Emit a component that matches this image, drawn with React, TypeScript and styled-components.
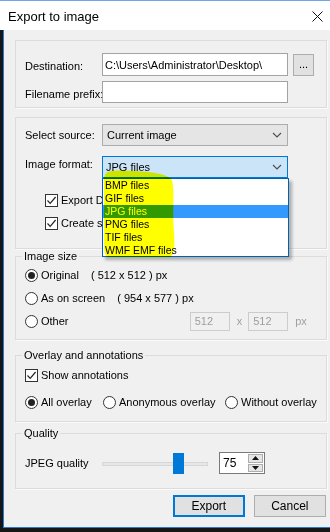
import React from "react";
import styled, { createGlobalStyle } from "styled-components";

const Global = createGlobalStyle`
  html, body { margin: 0; padding: 0; background: #161616; }
  body {
    width: 330px; height: 532px; overflow: hidden;
    font-family: "Liberation Sans", Arial, sans-serif;
    font-size: 11px; color: #000;
  }
  * { box-sizing: border-box; }
`;

const Screen = styled.div`
  width: 330px;
  height: 532px;
  display: flex;
  flex-direction: column;
  background: #161616;
`;

const TitleBar = styled.div`
  height: 30px;
  flex: none;
  background: #fff;
  border-top: 1px solid #6fa8e6;
  display: flex;
  align-items: center;
  justify-content: space-between;
  padding: 1px 7px 0 8px;
  font-size: 13px;
  color: #000;
`;

const BodyRow = styled.div`
  display: flex;
  flex: none;
  height: 498px;
`;

const Strip = styled.div`
  width: 3px;
  flex: none;
  background: #161616;
`;

const Client = styled.div`
  flex: 1;
  background: #f0f0f0;
  border-left: 1px solid #2b79d0;
  border-bottom: 1px solid #2b79d0;
  padding: 10px 7px 0 11px;
  display: flex;
  flex-direction: column;
`;

const Group = styled.fieldset<{ $mt?: number }>`
  margin: ${(p) => p.$mt ?? 0}px 0 0 0;
  padding: 0;
  min-width: 0;
  border: 1px solid #dcdcdc;
  box-shadow: 1px 1px 0 #fbfbfb;
`;

const Legend = styled.legend`
  margin-left: 6px;
  padding: 0 2px;
  line-height: 14px;
  font-size: 11px;
`;

const Content = styled.div<{ $pt: number; $pb: number }>`
  padding: ${(p) => p.$pt}px 9px ${(p) => p.$pb}px 9px;
  display: flex;
  flex-direction: column;
`;

const FormGrid = styled.div<{ $gap: number }>`
  display: grid;
  grid-template-columns: 77px 186px auto;
  row-gap: ${(p) => p.$gap}px;
  align-items: start;
`;

const FieldLabel = styled.div<{ $pt?: number }>`
  padding-top: ${(p) => p.$pt ?? 0}px;
  line-height: 16px;
  white-space: nowrap;
`;

const TextBox = styled.div<{ $h: number }>`
  height: ${(p) => p.$h}px;
  background: #fff;
  border: 1px solid #a3a3a3;
  padding: 0 2px;
  display: flex;
  align-items: center;
  white-space: nowrap;
  overflow: hidden;
`;

const SmallButton = styled.div`
  margin: 1px 0 0 5px;
  width: 21px;
  height: 22px;
  background: #e1e1e1;
  border: 1px solid #adadad;
  display: flex;
  align-items: center;
  justify-content: center;
  padding-bottom: 2px;
`;

const SelectWrap = styled.div`
  position: relative;
`;

const Select = styled.div<{ $focus?: boolean }>`
  height: 22px;
  background: ${(p) => (p.$focus ? "#cce4f7" : "#e5e5e5")};
  border: 1px solid ${(p) => (p.$focus ? "#0078d7" : "#acacac")};
  display: flex;
  align-items: center;
  justify-content: space-between;
  padding: 0 5px 0 ${(p) => (p.$focus ? 3 : 4)}px;
  white-space: nowrap;
`;

const DropList = styled.div`
  position: absolute;
  left: 0;
  top: 100%;
  width: 187px;
  height: 79px;
  background: #fff;
  border: 1px solid #0063b1;
  box-shadow: 3px 3px 3px rgba(0, 0, 0, 0.28);
  z-index: 10;
  display: flex;
  flex-direction: column;
  font-size: 10.5px;
`;

const DropItem = styled.div<{ $sel?: boolean }>`
  height: 13px;
  line-height: 13px;
  padding-left: 2px;
  background: ${(p) => (p.$sel ? "#3399ff" : "transparent")};
  color: ${(p) => (p.$sel ? "#fff" : "#000")};
  white-space: nowrap;
`;

const Marker = styled.svg`
  position: absolute;
  left: -2px;
  top: 11px;
  width: 80px;
  height: 92px;
  z-index: 11;
  mix-blend-mode: multiply;
  pointer-events: none;
`;

const CheckRow = styled.div<{ $ml?: number; $mt?: number }>`
  display: flex;
  align-items: center;
  gap: 3px;
  height: 20px;
  margin-left: ${(p) => p.$ml ?? 0}px;
  margin-top: ${(p) => p.$mt ?? 0}px;
  white-space: nowrap;
`;

const Box = styled.div`
  width: 13px;
  height: 13px;
  flex: none;
  background: #fff;
  border: 1px solid #333;
  display: flex;
  align-items: center;
  justify-content: center;
`;

const Circle = styled.div<{ $on?: boolean }>`
  width: 13px;
  height: 13px;
  flex: none;
  border-radius: 50%;
  background: #fff;
  border: 1px solid #333;
  display: flex;
  align-items: center;
  justify-content: center;
  &::after {
    content: "";
    width: 7px;
    height: 7px;
    border-radius: 50%;
    background: ${(p) => (p.$on ? "#222" : "transparent")};
  }
`;

const RadioLabel = styled.div<{ $w?: number }>`
  display: flex;
  align-items: center;
  gap: 3px;
  ${(p) => (p.$w ? `width: ${p.$w}px;` : "")}
`;

const Row = styled.div<{ $mt?: number }>`
  display: flex;
  align-items: center;
  height: 20px;
  margin-top: ${(p) => p.$mt ?? 0}px;
  white-space: nowrap;
`;

const SizeValue = styled.span`
  margin-left: 12px;
`;

const Dimensions = styled.div`
  margin-left: auto;
  margin-right: 10px;
  display: flex;
  align-items: center;
  color: #a0a0a0;
`;

const DisabledBox = styled.div`
  width: 40px;
  height: 19px;
  border: 1px solid #cccccc;
  background: #f0f0f0;
  color: #9d9d9d;
  display: flex;
  align-items: center;
  padding-left: 4px;
`;

const Times = styled.span`
  margin: 0 6px 0 7px;
`;

const Px = styled.span`
  margin-left: 7px;
`;

const QualityRow = styled.div`
  display: flex;
  align-items: center;
  height: 22px;
`;

const QualityLabel = styled.div`
  width: 77px;
  flex: none;
`;

const Track = styled.div`
  position: relative;
  width: 106px;
  height: 4px;
  background: #e7e7e7;
  border: 1px solid #d6d6d6;
  margin-top: 2px;
`;

const Thumb = styled.div`
  position: absolute;
  left: 70px;
  top: -10px;
  width: 11px;
  height: 21px;
  background: #0078d7;
`;

const Spin = styled.div`
  margin-left: 11px;
  width: 46px;
  height: 22px;
  background: #fff;
  border: 1px solid #7a7a7a;
  display: flex;
  align-items: stretch;
`;

const SpinText = styled.div`
  flex: 1;
  display: flex;
  align-items: center;
  padding-left: 3px;
  font-size: 12px;
`;

const SpinButtons = styled.div`
  width: 16px;
  display: flex;
  flex-direction: column;
  gap: 1px;
  padding: 1px 1px 1px 0;
`;

const SpinBtn = styled.div`
  flex: 1;
  background: #e5e5e5;
  border: 1px solid #adadad;
  display: flex;
  align-items: center;
  justify-content: center;
`;

const Buttons = styled.div`
  display: flex;
  justify-content: flex-end;
  gap: 9px;
  margin-top: 6px;
  padding-right: 1px;
`;

const Button = styled.div<{ $default?: boolean }>`
  width: 72px;
  height: 22px;
  background: #e1e1e1;
  border: ${(p) => (p.$default ? "2px solid #0078d7" : "1px solid #adadad")};
  display: flex;
  align-items: center;
  justify-content: center;
  font-size: 12px;
`;

const Chevron = () => (
  <svg width="10" height="6" viewBox="0 0 10 6">
    <path d="M1 1 L5 5 L9 1" fill="none" stroke="#4d4d4d" strokeWidth="1.1" />
  </svg>
);

const Check = () => (
  <svg width="11" height="11" viewBox="0 0 11 11">
    <path d="M1.5 5.5 L4.2 8.3 L9.6 2" fill="none" stroke="#222" strokeWidth="1.2" />
  </svg>
);

const Tri = ({ up }: { up?: boolean }) => (
  <svg width="7" height="4" viewBox="0 0 7 4">
    <path d={up ? "M0 4 L3.5 0 L7 4 Z" : "M0 0 L3.5 4 L7 0 Z"} fill="#111" />
  </svg>
);

export default function App() {
  const formats = ["BMP files", "GIF files", "JPG files", "PNG files", "TIF files", "WMF EMF files"];
  return (
    <>
      <Global />
      <Screen>
        <TitleBar>
          <span>Export to image</span>
          <svg width="11" height="11" viewBox="0 0 11 11">
            <path d="M0.5 0.5 L10.5 10.5 M10.5 0.5 L0.5 10.5" stroke="#111" strokeWidth="1" />
          </svg>
        </TitleBar>
        <BodyRow>
          <Strip />
          <Client>
            <Group>
              <Content $pt={12} $pb={4}>
                <FormGrid $gap={5}>
                  <FieldLabel $pt={5}>Destination:</FieldLabel>
                  <TextBox $h={23}>C:\Users\Administrator\Desktop\</TextBox>
                  <SmallButton>...</SmallButton>
                  <FieldLabel $pt={5}>Filename prefix:</FieldLabel>
                  <TextBox $h={22} />
                  <span />
                </FormGrid>
              </Content>
            </Group>

            <Group $mt={9}>
              <Content $pt={6} $pb={15}>
                <FormGrid $gap={10}>
                  <FieldLabel $pt={3}>Select source:</FieldLabel>
                  <Select>
                    <span>Current image</span>
                    <Chevron />
                  </Select>
                  <span />
                  <FieldLabel $pt={0}>Image format:</FieldLabel>
                  <SelectWrap>
                    <Select $focus>
                      <span>JPG files</span>
                      <Chevron />
                    </Select>
                    <DropList>
                      {formats.map((f) => (
                        <DropItem key={f} $sel={f === "JPG files"}>
                          {f}
                        </DropItem>
                      ))}
                    </DropList>
                    <Marker viewBox="0 0 80 92">
                      <path
                        d="M5 8 C7 3 16 3 35 4 C54 5 67 7 72 13 C75 26 72 46 74 66 C75 79 74 88 70 90 L8 90 C4 89 4 82 4 72 L4 17 C4 12 4 10 5 8 Z"
                        fill="#ffff00"
                      />
                    </Marker>
                  </SelectWrap>
                  <span />
                </FormGrid>
                <CheckRow $ml={20} $mt={12}>
                  <Box>
                    <Check />
                  </Box>
                  <span>Export D</span>
                </CheckRow>
                <CheckRow $ml={20} $mt={3}>
                  <Box>
                    <Check />
                  </Box>
                  <span>Create s</span>
                </CheckRow>
              </Content>
            </Group>

            <Group>
              <Legend>Image size</Legend>
              <Content $pt={2} $pb={8}>
                <Row>
                  <RadioLabel>
                    <Circle $on />
                    <span>Original</span>
                  </RadioLabel>
                  <SizeValue>( 512 x 512 ) px</SizeValue>
                </Row>
                <Row $mt={3}>
                  <RadioLabel>
                    <Circle />
                    <span>As on screen</span>
                  </RadioLabel>
                  <SizeValue>( 954 x 577 ) px</SizeValue>
                </Row>
                <Row $mt={3}>
                  <RadioLabel>
                    <Circle />
                    <span>Other</span>
                  </RadioLabel>
                  <Dimensions>
                    <DisabledBox>512</DisabledBox>
                    <Times>x</Times>
                    <DisabledBox>512</DisabledBox>
                    <Px>px</Px>
                  </Dimensions>
                </Row>
              </Content>
            </Group>

            <Group $mt={8}>
              <Legend>Overlay and annotations</Legend>
              <Content $pt={3} $pb={9}>
                <CheckRow>
                  <Box>
                    <Check />
                  </Box>
                  <span>Show annotations</span>
                </CheckRow>
                <Row $mt={7}>
                  <RadioLabel $w={78}>
                    <Circle $on />
                    <span>All overlay</span>
                  </RadioLabel>
                  <RadioLabel $w={122}>
                    <Circle />
                    <span>Anonymous overlay</span>
                  </RadioLabel>
                  <RadioLabel>
                    <Circle />
                    <span>Without overlay</span>
                  </RadioLabel>
                </Row>
              </Content>
            </Group>

            <Group $mt={4}>
              <Legend>Quality</Legend>
              <Content $pt={12} $pb={14}>
                <QualityRow>
                  <QualityLabel>JPEG quality</QualityLabel>
                  <Track>
                    <Thumb />
                  </Track>
                  <Spin>
                    <SpinText>75</SpinText>
                    <SpinButtons>
                      <SpinBtn>
                        <Tri up />
                      </SpinBtn>
                      <SpinBtn>
                        <Tri />
                      </SpinBtn>
                    </SpinButtons>
                  </Spin>
                </QualityRow>
              </Content>
            </Group>

            <Buttons>
              <Button $default>Export</Button>
              <Button>Cancel</Button>
            </Buttons>
          </Client>
        </BodyRow>
      </Screen>
    </>
  );
}
